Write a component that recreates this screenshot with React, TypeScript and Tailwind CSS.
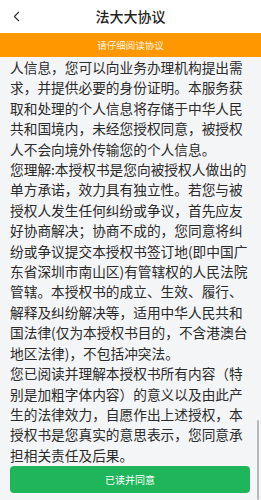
import React from 'react';
import { ChevronLeft } from 'lucide-react';

const LINES = [
  '人信息，您可以向业务办理机构提出需',
  '求，并提供必要的身份证明。本服务获',
  '取和处理的个人信息将存储于中华人民',
  '共和国境内，未经您授权同意，被授权',
  '人不会向境外传输您的个人信息。',
  '您理解:本授权书是您向被授权人做出的',
  '单方承诺，效力具有独立性。若您与被',
  '授权人发生任何纠纷或争议，首先应友',
  '好协商解决；协商不成的，您同意将纠',
  '纷或争议提交本授权书签订地(即中国广',
  '东省深圳市南山区)有管辖权的人民法院',
  '管辖。本授权书的成立、生效、履行、',
  '解释及纠纷解决等，适用中华人民共和',
  '国法律(仅为本授权书目的，不含港澳台',
  '地区法律)，不包括冲突法。',
  '您已阅读并理解本授权书所有内容（特',
  '别是加粗字体内容）的意义以及由此产',
  '生的法律效力，自愿作出上述授权，本',
  '授权书是您真实的意思表示，您同意承',
  '担相关责任及后果。',
];

export default function App() {
  return (
    <div
      className="relative w-[261px] h-[500px] overflow-hidden flex flex-col bg-[#f4f5f7] text-[#2b2b2b]"
      style={{ fontFamily: '"Noto Sans CJK SC", "Noto Sans", sans-serif' }}
    >
      {/* Header */}
      <div className="relative h-[33px] shrink-0 bg-white flex items-center justify-center">
        <ChevronLeft className="absolute left-[8px] top-[8px] w-[17px] h-[17px] text-[#333]" strokeWidth={1.6} />
        <span className="text-[14px] font-medium text-[#222]">法大大协议</span>
      </div>

      {/* Notice bar */}
      <div className="h-[24px] shrink-0 bg-[#ff9800] flex items-center justify-center">
        <span className="text-[9.5px] text-white/90">请仔细阅读协议</span>
      </div>

      {/* Agreement text */}
      <div className="flex-1 overflow-hidden px-[10px]">
        <div className="text-[13.7px] leading-[20.4px] whitespace-nowrap">
          {LINES.map((line, i) => (
            <div key={i}>{line}</div>
          ))}
        </div>
        <button className="mt-[1px] w-[240px] h-[27px] rounded-[4px] bg-[#1fb55b] text-white text-[10px] flex items-center justify-center">
          已读并同意
        </button>
      </div>

      {/* scrollbar thumb */}
      <div className="absolute right-[2px] top-[420px] w-[2px] h-[80px] rounded-full bg-[#b8b8b8]" />
    </div>
  );
}
